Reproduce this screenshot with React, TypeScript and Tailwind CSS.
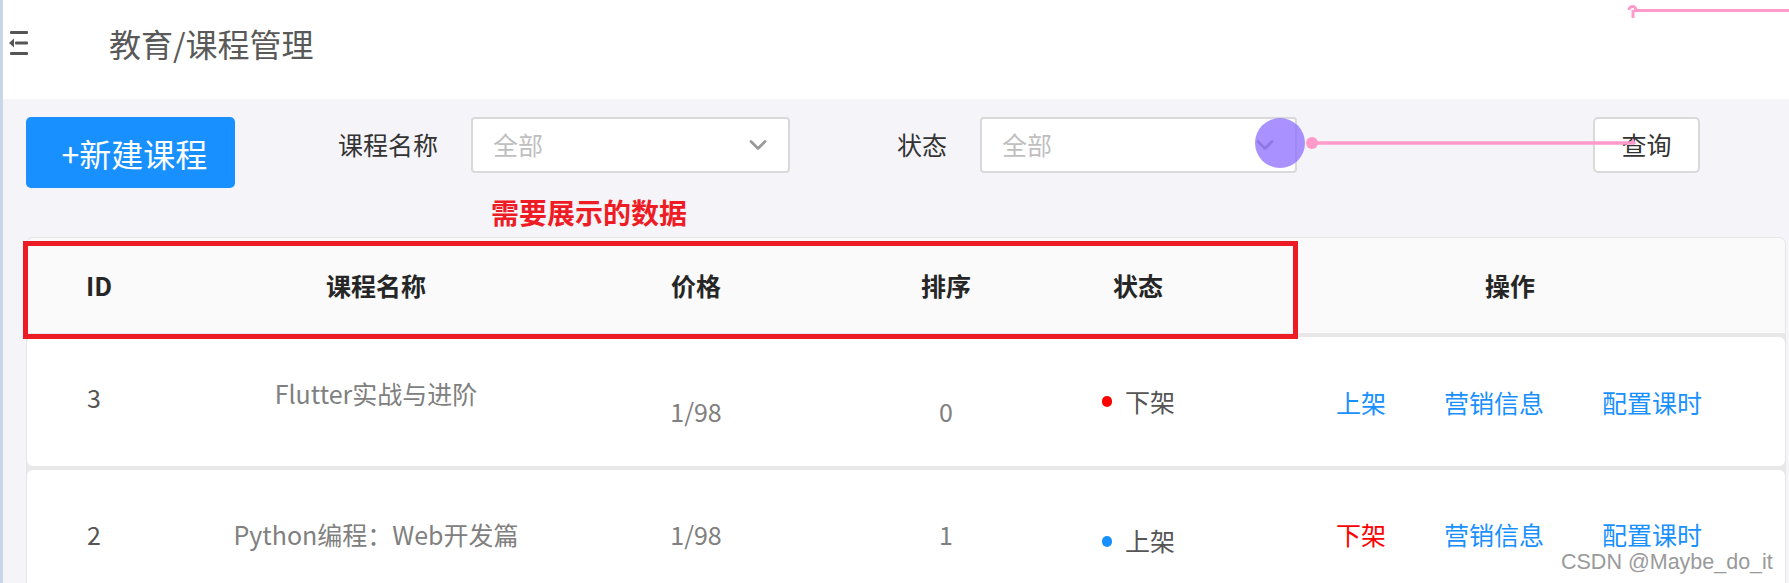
import { ChevronDown } from "lucide-react";

const cjk = { fontFamily: '"Noto Sans CJK SC", "Noto Sans", sans-serif' };

const cols = "grid grid-cols-[174px_350px_290px_210px_174px_1fr]";

function MenuFold() {
  return (
    <svg width="20" height="26" viewBox="0 0 20 26" className="text-[#555]">
      <rect x="1" y="1" width="18" height="3" rx="1" fill="currentColor" />
      <rect x="6" y="11.5" width="13" height="3" rx="1" fill="currentColor" />
      <path d="M0 13 L5 8.5 V17.5 Z" fill="currentColor" />
      <rect x="1" y="22" width="18" height="3" rx="1" fill="currentColor" />
    </svg>
  );
}

function Select({ width }: { width: string }) {
  return (
    <div
      className={`${width} h-[56px] rounded-[4px] border-2 border-[#d9d9d9] bg-white flex items-center justify-between pl-[20px] pr-[16px]`}
    >
      <span className="text-[25px] text-[#bfbfbf]">全部</span>
      <ChevronDown size={28} strokeWidth={2.4} className="text-[#999]" />
    </div>
  );
}

interface Row {
  id: number;
  name: string;
  price: string;
  sort: number;
  online: boolean;
}

const rows: Row[] = [
  { id: 3, name: "Flutter实战与进阶", price: "1/98", sort: 0, online: false },
  { id: 2, name: "Python编程：Web开发篇", price: "1/98", sort: 1, online: true },
];

function TableRow({ row, first }: { row: Row; first: boolean }) {
  return (
    <div className={`${cols} h-[129px] shrink-0 bg-white rounded-[6px] items-center text-[25px]`}>
      <div className={`pl-[60px] text-[#555] ${first ? "mb-[7px]" : ""}`}>{row.id}</div>
      <div className={`text-center text-[#808080] ${first ? "mb-[15px]" : ""}`}>{row.name}</div>
      <div className={`text-center text-[#808080] ${first ? "mt-[21px]" : ""}`}>{row.price}</div>
      <div className={`text-center text-[#808080] ${first ? "mt-[21px]" : ""}`}>{row.sort}</div>
      <div className={`flex items-center pl-[51px] text-[#555] ${first ? "" : "mt-[13px]"}`}>
        <span
          className={`w-[10px] h-[11px] rounded-full mr-[13px] ${row.online ? "bg-[#1890ff]" : "bg-[#ff0000]"}`}
        />
        {row.online ? "上架" : "下架"}
      </div>
      <div className={`flex items-center pl-[111px] gap-[58px] ${first ? "mt-[3px]" : ""}`}>
        <span className={row.online ? "text-[#ff0000]" : "text-[#1890ff]"}>
          {row.online ? "下架" : "上架"}
        </span>
        <span className="text-[#1890ff]">营销信息</span>
        <span className="text-[#1890ff]">配置课时</span>
      </div>
    </div>
  );
}

export default function App() {
  return (
    <div
      className="relative w-[1789px] h-[583px] overflow-hidden flex bg-white"
      style={cjk}
    >
      <div className="w-[3px] shrink-0 bg-[#cbd5e8]" />
      <div className="flex-1 flex flex-col">
        {/* header */}
        <div className="h-[99px] shrink-0 bg-white flex items-center">
          <div className="ml-[6px] mb-[14px]">
            <MenuFold />
          </div>
          <div className="ml-[80px] mb-[14px] text-[32px] text-[#595959] leading-none">
            教育/课程管理
          </div>
        </div>

        {/* content */}
        <div className="flex-1 bg-[#f5f5f9] pl-[23px] pr-[3px] flex flex-col">
          <div className="pt-[18px] flex items-start">
            <button className="w-[209px] h-[71px] rounded-[5px] bg-[#1890ff] text-white text-[32px] flex items-center justify-center pl-[8px]">
              +新建课程
            </button>
            <div className="ml-[103px] h-[56px] flex items-center text-[25px] text-[#333]">
              课程名称
            </div>
            <div className="ml-[33px]">
              <Select width="w-[319px]" />
            </div>
            <div className="ml-[107px] h-[56px] flex items-center text-[25px] text-[#333]">
              状态
            </div>
            <div className="ml-[33px]">
              <Select width="w-[317px]" />
            </div>
            <button className="ml-[296px] w-[107px] h-[56px] rounded-[5px] border-2 border-[#d9d9d9] bg-white text-[25px] text-[#333] flex items-center justify-center">
              查询
            </button>
          </div>

          <div className="h-[49px] shrink-0 pt-[10px] pl-[465px]">
            <span className="text-[28px] font-bold text-[#ee1c25] leading-none">
              需要展示的数据
            </span>
          </div>

          {/* table */}
          <div className="relative flex flex-col gap-[4px] bg-[#e8e8e8] rounded-t-[7px] border border-[#e6e6e6]">
            <div
              className={`${cols} h-[95px] shrink-0 bg-[#fafafa] rounded-t-[6px] items-center text-[25px] font-bold text-[#262626]`}
            >
              <div className="pl-[59px]">ID</div>
              <div className="text-center">课程名称</div>
              <div className="text-center">价格</div>
              <div className="text-center">排序</div>
              <div className="text-center">状态</div>
              <div className="text-center pl-[10px]">操作</div>
            </div>
            {rows.map((r, i) => (
              <TableRow key={r.id} row={r} first={i === 0} />
            ))}
            <div className="absolute left-[-4px] top-[3px] w-[1275px] h-[98px] border-[5px] border-[#ed1c24]" />
          </div>
        </div>
      </div>

      {/* annotation overlays */}
      <div className="absolute left-[1255px] top-[118px] w-[50px] h-[50px] rounded-full bg-[rgba(140,110,255,0.75)]" />
      <svg
        className="absolute left-0 top-0 pointer-events-none"
        width="1789"
        height="583"
      >
        <circle cx="1312" cy="143" r="6" fill="#ff9acb" />
        <line x1="1312" y1="143" x2="1634" y2="143" stroke="#ff9acb" strokeWidth="3.5" />
        <path d="M1630 144 L1633 138 L1636 144 Z" fill="#ff9acb" />
        <path
          d="M1629 10 a 3.5 3.5 0 0 1 7 0 M1633 10 V18 M1634 10.5 H1789"
          stroke="#ff9acb"
          strokeWidth="3"
          fill="none"
        />
      </svg>
      <div
        className="absolute left-[1561px] top-[552px] text-[21.5px] leading-none text-[#9a9a9a]"
        style={{ fontFamily: '"Liberation Sans", Arial, sans-serif' }}
      >
        CSDN @Maybe_do_it
      </div>
    </div>
  );
}
